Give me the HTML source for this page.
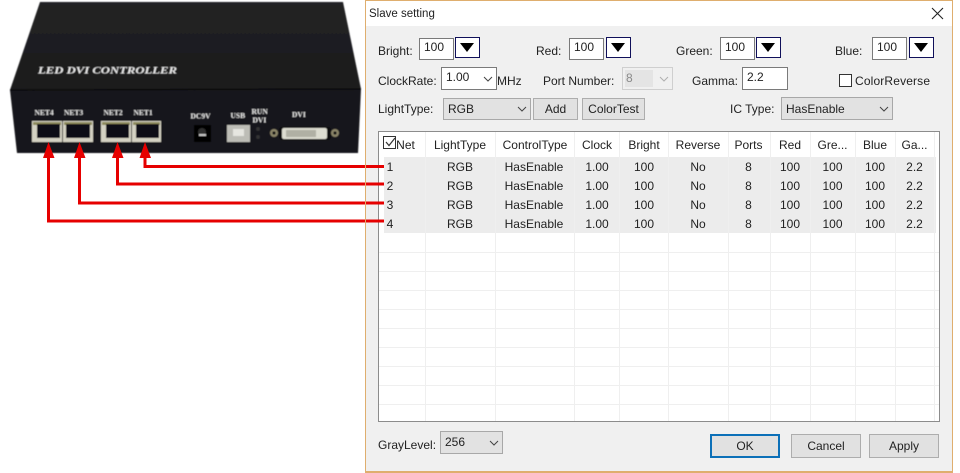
<!DOCTYPE html>
<html><head><meta charset="utf-8"><style>
html,body{margin:0;padding:0;background:#fff}
#p{position:relative;width:960px;height:473px;overflow:hidden;background:#fff;font-family:"Liberation Sans",sans-serif;font-size:12px;color:#222}
#p div{position:absolute;box-sizing:border-box;white-space:nowrap}
.t{line-height:14px}
.c{text-align:center;line-height:19px;height:19px;margin-top:1px}
.in{background:#fff;border:1px solid #7a7a7a;line-height:17px;padding-left:4px}
.dd{width:25px;height:21px;background:#fff;border:1px solid #10105a}
.dd:after{content:"";position:absolute;left:4px;top:5px;border-left:7.5px solid transparent;border-right:7.5px solid transparent;border-top:9px solid #000;width:0;height:0}
.sel{background:#e2e2e2;border:1px solid #a8a8a8;line-height:19px;padding-left:3px}
.btn{background:#e1e1e1;border:1px solid #adadad;text-align:center;line-height:20px}
svg{position:absolute}
</style></head><body><div id="p">

<svg style="left:0;top:0" width="366" height="240" viewBox="0 0 366 240">
<defs><filter id="b" x="-2%" y="-2%" width="104%" height="104%"><feGaussianBlur stdDeviation="0.45"/></filter>
<linearGradient id="g" x1="0" y1="0" x2="0" y2="1"><stop offset="0" stop-color="#232325"/><stop offset="1" stop-color="#1a1a1c"/></linearGradient></defs>
<g filter="url(#b)">
<polygon points="40,2 343,2 361,89 10,90" fill="url(#g)"/>
<polygon points="10,90 361,89 358,153 17,153" fill="#17171a"/>
<line x1="10" y1="90" x2="361" y2="89" stroke="#0b0b0c" stroke-width="1.5"/>
<text x="38" y="73.500" font-family="Liberation Serif" font-size="9.500" font-weight="bold" font-style="italic" fill="#e8e8e8" textLength="139" lengthAdjust="spacingAndGlyphs">LED DVI CONTROLLER</text>
<g font-family="Liberation Serif" font-size="7.500" font-weight="bold" fill="#e4e4e4">
<text x="34.500" y="115">NET4</text><text x="64" y="115">NET3</text><text x="103.500" y="115">NET2</text><text x="133.500" y="115">NET1</text>
<text x="190.500" y="118.500">DC9V</text><text x="230.500" y="118">USB</text><text x="251.500" y="114">RUN</text><text x="252.500" y="122.500">DVI</text><text x="292" y="117">DVI</text>
</g>
<g fill="#d3d1c2"><rect x="32" y="121" width="30" height="21"/><rect x="63" y="121" width="30" height="21"/><rect x="101" y="121" width="30" height="21"/><rect x="132" y="121" width="29" height="21"/></g>
<g fill="#8d8a5c"><rect x="33" y="122" width="28" height="3"/><rect x="64" y="122" width="28" height="3"/><rect x="102" y="122" width="28" height="3"/><rect x="133" y="122" width="27" height="3"/></g>
<g fill="#101012"><rect x="37" y="124" width="23" height="14"/><rect x="66" y="124" width="24" height="14"/><rect x="106" y="124" width="23" height="14"/><rect x="136" y="124" width="23" height="14"/></g>
<rect x="194" y="125" width="17" height="17" fill="#050505"/><circle cx="202" cy="132" r="4" fill="#2e2e2e"/><rect x="199" y="134" width="7" height="2" fill="#c4c4c4"/>
<rect x="227" y="125" width="23" height="17" fill="#bdbdb6"/><rect x="233" y="129" width="11" height="7" fill="#e6e6e0"/>
<circle cx="258" cy="129" r="2" fill="#333"/><circle cx="258" cy="137" r="2" fill="#333"/>
<circle cx="274" cy="133" r="4" fill="#8a8468"/><circle cx="274" cy="133" r="1.600" fill="#111"/><circle cx="335" cy="133" r="4" fill="#8a8468"/><circle cx="335" cy="133" r="1.600" fill="#111"/>
<rect x="279" y="127" width="52" height="13" rx="3" fill="#0a0a0a"/>
<rect x="282" y="128" width="45" height="11" rx="2" fill="#dcdcd0"/><rect x="286" y="130" width="30" height="7" fill="#b0b0a4"/>
</g>
<g fill="none" stroke="#e60000" stroke-width="3">
<path d="M145 155V166.500H366"/><path d="M117.500 155V184H366"/><path d="M79.500 155V203H366"/><path d="M48.500 155V221H366"/>
</g>
<g fill="#e60000"><polygon points="145,142 139.500,158 151,158"/><polygon points="117.500,142 112,158 123.500,158"/><polygon points="79.500,142 74,158 85.500,158"/><polygon points="48.500,142 43,158 54.500,158"/></g>
</svg>

<div style="left:365px;top:0;width:588px;height:473px;background:#f0f0f0;border:1px solid #dfae6e;border-width:1px 1px 2px 1px"></div>
<div style="left:366px;top:1px;width:586px;height:25px;background:#fff"></div>
<div class="t" style="left:369px;top:7px;font-size:11.5px">Slave setting</div>
<svg style="left:931px;top:7px" width="13" height="13"><path d="M1 1L12 12M12 1L1 12" stroke="#222" stroke-width="1.100" fill="none"/></svg>

<div class="t" style="left:378px;top:44px">Bright:</div>
<div class="in" style="left:419px;top:38px;width:35px;height:22px">100</div><div class="dd" style="left:455px;top:37px"></div>
<div class="t" style="left:536px;top:44px">Red:</div>
<div class="in" style="left:569px;top:38px;width:35px;height:22px">100</div><div class="dd" style="left:606px;top:37px"></div>
<div class="t" style="left:676px;top:44px">Green:</div>
<div class="in" style="left:720px;top:37px;width:35px;height:23px;line-height:19px">100</div><div class="dd" style="left:756px;top:37px"></div>
<div class="t" style="left:835px;top:44px">Blue:</div>
<div class="in" style="left:872px;top:37px;width:35px;height:23px;line-height:19px">100</div><div class="dd" style="left:909px;top:37px"></div>

<div class="t" style="left:378px;top:74px">ClockRate:</div>
<div class="in" style="left:441px;top:67px;width:56px;height:23px;line-height:19px">1.00</div>
<svg style="left:483px;top:76px" width="10" height="6"><path d="M1 1L5 5L9 1" stroke="#444" fill="none"/></svg>
<div class="t" style="left:497px;top:74px">MHz</div>
<div class="t" style="left:543px;top:74px">Port Number:</div>
<div style="left:622px;top:67px;width:51px;height:23px;background:#f0f0f0;border:1px solid #cfcfcf"></div>
<div style="left:625px;top:70px;width:28px;height:17px;background:#e4e4e4;color:#8a8a8a;line-height:16px;padding-left:1px">8</div>
<svg style="left:659px;top:76px" width="10" height="6"><path d="M1 1L5 5L9 1" stroke="#b0b0b0" fill="none"/></svg>
<div class="t" style="left:692px;top:74px">Gamma:</div>
<div class="in" style="left:742px;top:67px;width:46px;height:23px;line-height:19px">2.2</div>
<div style="left:839px;top:74px;width:13px;height:13px;background:#fff;border:1px solid #333"></div>
<div class="t" style="left:855px;top:74px;letter-spacing:.15px">ColorReverse</div>

<div class="t" style="left:378px;top:102px">LightType:</div>
<div class="sel" style="left:443px;top:98px;width:88px;height:22px;padding-left:4px;line-height:20px">RGB</div>
<svg style="left:517px;top:106px" width="10" height="6"><path d="M1 1L5 5L9 1" stroke="#444" fill="none"/></svg>
<div class="btn" style="left:533px;top:98px;width:45px;height:22px">Add</div>
<div class="btn" style="left:582px;top:98px;width:63px;height:22px">ColorTest</div>
<div class="t" style="left:730px;top:102px">IC Type:</div>
<div class="sel" style="left:781px;top:97px;width:112px;height:23px;padding-left:4px;line-height:22px">HasEnable</div>
<svg style="left:879px;top:106px" width="10" height="6"><path d="M1 1L5 5L9 1" stroke="#444" fill="none"/></svg>

<div style="left:378px;top:131px;width:562px;height:291px;background:#fff;border:1px solid #8c8c8c"></div>
<div style="left:384px;top:157px;width:552px;height:76px;background:#ececec"></div>
<svg style="left:379px;top:132px" width="560" height="289" shape-rendering="crispEdges" stroke="#efefef" fill="none">
<path d="M46.500 0V289M116.500 0V289M195.500 0V289M240.500 0V289M289.500 0V289M349.500 0V289M391.500 0V289M431.500 0V289M476.500 0V289M516.500 0V289M555.500 0V289"/>
<path d="M0 120.500H560M0 139.500H560M0 158.500H560M0 177.500H560M0 196.500H560M0 215.500H560M0 234.500H560M0 253.500H560M0 272.500H560"/>
</svg>
<svg style="left:383px;top:136px" width="15" height="14"><rect x="0.500" y="0.500" width="12" height="12" fill="#fff" stroke="#333"/><path d="M3 6L6 9.500L12 2" stroke="#333" fill="none" stroke-width="1.200"/></svg>

<div class="c" style="left:396px;top:135px;width:19px">Net</div>
<div class="c" style="left:426px;top:135px;width:68px">LightType</div>
<div class="c" style="left:496px;top:135px;width:78px">ControlType</div>
<div class="c" style="left:575px;top:135px;width:44px">Clock</div>
<div class="c" style="left:620px;top:135px;width:48px">Bright</div>
<div class="c" style="left:669px;top:135px;width:58px">Reverse</div>
<div class="c" style="left:729px;top:135px;width:39px">Ports</div>
<div class="c" style="left:771px;top:135px;width:38px">Red</div>
<div class="c" style="left:811px;top:135px;width:43px">Gre...</div>
<div class="c" style="left:856px;top:135px;width:38px">Blue</div>
<div class="c" style="left:896px;top:135px;width:37px">Ga...</div>

<div class="c" style="left:386px;top:157px;width:8px">1</div><div class="c" style="left:426px;top:157px;width:68px">RGB</div><div class="c" style="left:495px;top:157px;width:78px">HasEnable</div><div class="c" style="left:575px;top:157px;width:44px">1.00</div><div class="c" style="left:620px;top:157px;width:48px">100</div><div class="c" style="left:669px;top:157px;width:58px">No</div><div class="c" style="left:729px;top:157px;width:39px">8</div><div class="c" style="left:771px;top:157px;width:38px">100</div><div class="c" style="left:811px;top:157px;width:43px">100</div><div class="c" style="left:856px;top:157px;width:38px">100</div><div class="c" style="left:896px;top:157px;width:37px">2.2</div>
<div class="c" style="left:386px;top:176px;width:8px">2</div><div class="c" style="left:426px;top:176px;width:68px">RGB</div><div class="c" style="left:495px;top:176px;width:78px">HasEnable</div><div class="c" style="left:575px;top:176px;width:44px">1.00</div><div class="c" style="left:620px;top:176px;width:48px">100</div><div class="c" style="left:669px;top:176px;width:58px">No</div><div class="c" style="left:729px;top:176px;width:39px">8</div><div class="c" style="left:771px;top:176px;width:38px">100</div><div class="c" style="left:811px;top:176px;width:43px">100</div><div class="c" style="left:856px;top:176px;width:38px">100</div><div class="c" style="left:896px;top:176px;width:37px">2.2</div>
<div class="c" style="left:386px;top:195px;width:8px">3</div><div class="c" style="left:426px;top:195px;width:68px">RGB</div><div class="c" style="left:495px;top:195px;width:78px">HasEnable</div><div class="c" style="left:575px;top:195px;width:44px">1.00</div><div class="c" style="left:620px;top:195px;width:48px">100</div><div class="c" style="left:669px;top:195px;width:58px">No</div><div class="c" style="left:729px;top:195px;width:39px">8</div><div class="c" style="left:771px;top:195px;width:38px">100</div><div class="c" style="left:811px;top:195px;width:43px">100</div><div class="c" style="left:856px;top:195px;width:38px">100</div><div class="c" style="left:896px;top:195px;width:37px">2.2</div>
<div class="c" style="left:386px;top:214px;width:8px">4</div><div class="c" style="left:426px;top:214px;width:68px">RGB</div><div class="c" style="left:495px;top:214px;width:78px">HasEnable</div><div class="c" style="left:575px;top:214px;width:44px">1.00</div><div class="c" style="left:620px;top:214px;width:48px">100</div><div class="c" style="left:669px;top:214px;width:58px">No</div><div class="c" style="left:729px;top:214px;width:39px">8</div><div class="c" style="left:771px;top:214px;width:38px">100</div><div class="c" style="left:811px;top:214px;width:43px">100</div><div class="c" style="left:856px;top:214px;width:38px">100</div><div class="c" style="left:896px;top:214px;width:37px">2.2</div>

<svg style="left:366px;top:160px" width="18" height="70"><path d="M0 6.500H18M0 24H18M0 43H18M0 61H18" stroke="#e60000" stroke-width="3"/></svg>

<div class="t" style="left:378px;top:438px">GrayLevel:</div>
<div class="sel" style="left:440px;top:431px;width:63px;height:23px;padding-left:4px;line-height:20px">256</div>
<svg style="left:489px;top:440px" width="10" height="6"><path d="M1 1L5 5L9 1" stroke="#444" fill="none"/></svg>
<div class="btn" style="left:710px;top:434px;width:70px;height:24px;border:2px solid #0c70b8;line-height:20px">OK</div>
<div class="btn" style="left:791px;top:434px;width:70px;height:24px;line-height:22px">Cancel</div>
<div class="btn" style="left:869px;top:434px;width:70px;height:24px;line-height:22px">Apply</div>
</div></body></html>
